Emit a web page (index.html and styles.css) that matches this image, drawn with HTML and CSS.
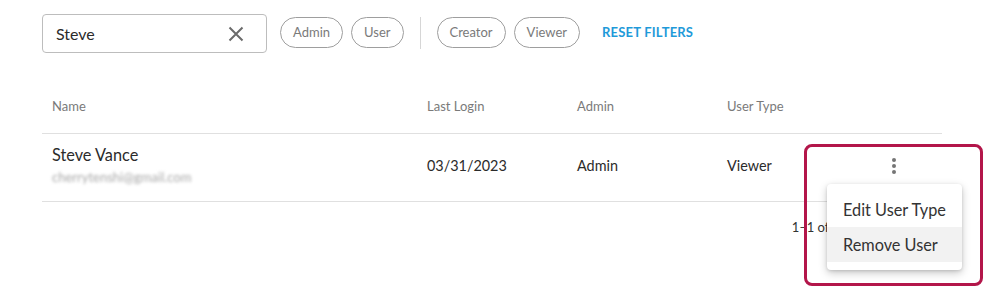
FILE: index.html
```html
<!DOCTYPE html>
<html>
<head>
<meta charset="utf-8">
<link rel="stylesheet" href="styles.css">
</head>
<body>
<div class="page">
  <div class="toolbar">
    <div class="search">
      <span class="search-text">Steve</span>
      <svg class="clear" width="16" height="16" viewBox="0 0 16 16"><path d="M1.5 1.5 L14.5 14.5 M14.5 1.5 L1.5 14.5" stroke="#6b6b6b" stroke-width="2" fill="none"/></svg>
    </div>
    <div class="chips">
      <span class="chip">Admin</span>
      <span class="chip">User</span>
    </div>
    <span class="divider"></span>
    <div class="chips">
      <span class="chip">Creator</span>
      <span class="chip">Viewer</span>
    </div>
    <span class="reset">RESET FILTERS</span>
  </div>

  <div class="table">
    <div class="row head">
      <div class="cell name">Name</div>
      <div class="cell">Last Login</div>
      <div class="cell">Admin</div>
      <div class="cell">User Type</div>
      <div class="cell"></div>
    </div>
    <div class="row data">
      <div class="cell name">
        <div class="user-name">Steve Vance</div>
        <div class="email">cherrytenshi@gmail.com</div>
      </div>
      <div class="cell">03/31/2023</div>
      <div class="cell">Admin</div>
      <div class="cell">Viewer</div>
      <div class="cell actions">
        <span class="kebab"><i></i><i></i><i></i></span>
      </div>
    </div>
  </div>
  <div class="pager">1–1 of 1</div>

  <div class="menu">
    <div class="menu-item">Edit User Type</div>
    <div class="menu-item active">Remove User</div>
  </div>
  <div class="highlight"></div>
</div>
</body>
</html>
```

FILE: styles.css
```css
* { box-sizing: border-box; }
html, body { margin: 0; padding: 0; background: #fff; }
body { font-family: Lato, "Open Sans", sans-serif; color: #2b2b2b; }
.page { position: relative; width: 1005px; height: 306px; padding: 14px 0 0 42px; overflow: hidden; }

.toolbar { display: flex; align-items: center; height: 39px; }
.search {
  width: 225px; height: 39px; border: 1px solid #bdbdbd; border-radius: 4px;
  display: flex; align-items: center; justify-content: space-between;
  padding: 0 22px 0 13px;
}
.search-text { font-size: 16px; color: #2b2b2b; }
.clear { display: block; }
.chips { display: flex; gap: 8px; margin-left: 13px; }
.chip {
  height: 31px; padding: 0 12px 1px; border: 1px solid #9e9e9e; border-radius: 16px;
  font-size: 13px; color: #7a7a7a; display: flex; align-items: center; margin-top: -2px;
}
.divider { width: 1px; height: 32px; background: #d6d6d6; margin: -2px 3px 0 16px; }
.reset { margin-left: 22px; font-size: 13px; font-weight: 700; color: #1f9ad9; letter-spacing: 0.2px; margin-top: -3px; }

.table { margin-top: 25px; width: 900px; }
.row { display: grid; grid-template-columns: 375px 150px 150px 150px 75px; align-items: center; border-bottom: 1px solid #e0e0e0; }
.row.head { height: 56px; font-size: 13px; color: #7a7a7a; }
.row.data { height: 68px; font-size: 14.4px; color: #2b2b2b; }
.row.data > .cell { margin-top: -4px; }
.cell { padding-left: 10px; }
.user-name { font-size: 16.3px; color: #2b2b2b; margin-top: -2px; }
.email { font-size: 13px; color: #a8a8a8; filter: blur(1.4px); margin-top: 5px; }
.actions { display: flex; padding-left: 25px; }
.kebab { display: flex; flex-direction: column; gap: 2px; }
.kebab i { width: 4px; height: 4px; border-radius: 50%; background: #757575; display: block; }

.pager { width: 900px; text-align: right; font-size: 13px; color: #333; padding: 17px 102px 0 0; }

.menu {
  position: absolute; left: 827px; top: 184px; width: 135px; height: 86px;
  background: #fff; border-radius: 4px; padding: 8px 0 8px;
  box-shadow: 0 3px 8px rgba(0,0,0,0.22), 0 1px 3px rgba(0,0,0,0.12);
}
.menu-item { height: 35px; padding-left: 16px; padding-bottom: 1px; display: flex; align-items: center; font-size: 16.3px; color: #333; }
.menu-item.active { background: #f2f2f2; }

.highlight {
  position: absolute; left: 804px; top: 144px; width: 179px; height: 142px;
  border: 3px solid #b3164a; border-radius: 8px;
}
```
